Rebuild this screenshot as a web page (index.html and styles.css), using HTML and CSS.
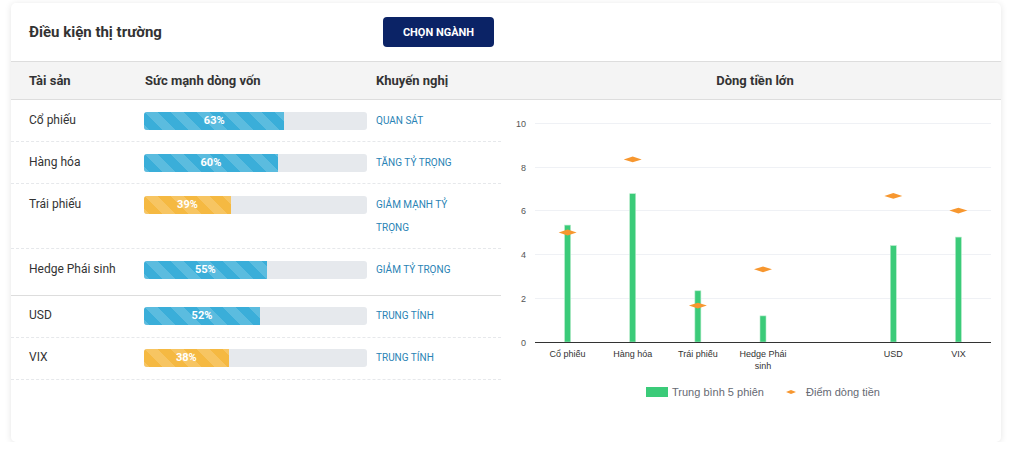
FILE: index.html
```html
<!DOCTYPE html>
<html lang="vi">
<head>
<meta charset="utf-8">
<title>Điều kiện thị trường</title>
<link rel="stylesheet" href="styles.css">
</head>
<body>
<div class="card">
  <div class="card-header">
    <h2 class="title">Điều kiện thị trường</h2>
    <button class="btn">CHỌN NGÀNH</button>
  </div>
  <div class="table-head">
    <div class="head-left">
      <div>Tài sản</div>
      <div>Sức mạnh dòng vốn</div>
      <div>Khuyến nghị</div>
    </div>
    <div class="head-right">Dòng tiền lớn</div>
  </div>
  <div class="body">
    <div class="rows">
      <div class="row">
        <div class="label">Cổ phiếu</div>
        <div class="bar"><div class="fill blue" style="width:63%">63%</div></div>
        <div class="rec">QUAN SÁT</div>
      </div>
      <div class="row">
        <div class="label">Hàng hóa</div>
        <div class="bar"><div class="fill blue" style="width:60%">60%</div></div>
        <div class="rec">TĂNG TỶ TRỌNG</div>
      </div>
      <div class="row">
        <div class="label">Trái phiếu</div>
        <div class="bar"><div class="fill yellow" style="width:39%">39%</div></div>
        <div class="rec">GIẢM MẠNH TỶ TRỌNG</div>
      </div>
      <div class="row group-end">
        <div class="label">Hedge Phái sinh</div>
        <div class="bar"><div class="fill blue" style="width:55%">55%</div></div>
        <div class="rec">GIẢM TỶ TRỌNG</div>
      </div>
      <div class="row second">
        <div class="label">USD</div>
        <div class="bar"><div class="fill blue" style="width:52%">52%</div></div>
        <div class="rec">TRUNG TÍNH</div>
      </div>
      <div class="row second">
        <div class="label">VIX</div>
        <div class="bar"><div class="fill yellow" style="width:38%">38%</div></div>
        <div class="rec">TRUNG TÍNH</div>
      </div>
    </div>
    <div class="chart">
      <svg class="chart-svg" width="500" height="310" viewBox="0 0 500 310">
        <g class="grid">
          <line x1="34" y1="23.5" x2="490" y2="23.5"/>
          <line x1="34" y1="67.5" x2="490" y2="67.5"/>
          <line x1="34" y1="110.5" x2="490" y2="110.5"/>
          <line x1="34" y1="154.5" x2="490" y2="154.5"/>
          <line x1="34" y1="198.5" x2="490" y2="198.5"/>
        </g>
        <g class="ylab">
          <text x="25" y="26.5">10</text>
          <text x="25" y="70.5">8</text>
          <text x="25" y="114">6</text>
          <text x="25" y="158">4</text>
          <text x="25" y="201.5">2</text>
          <text x="25" y="245.5">0</text>
        </g>
        <g class="bars">
          <rect x="63.6" y="125.1" width="6" height="116.9"/>
          <rect x="128.7" y="93.7" width="6" height="148.3"/>
          <rect x="193.9" y="190.8" width="6" height="51.2"/>
          <rect x="259" y="215.9" width="6" height="26.1"/>
          <rect x="389.3" y="145.6" width="6" height="96.4"/>
          <rect x="454.4" y="137.1" width="6" height="104.9"/>
        </g>
        <line class="axis" x1="34" y1="242.5" x2="490" y2="242.5"/>
        <g class="marks">
          <polygon points="57.6,132.5 66.6,129.6 75.6,132.5 66.6,135.4"/>
          <polygon points="122.7,59.4 131.7,56.5 140.7,59.4 131.7,62.3"/>
          <polygon points="187.9,205.6 196.9,202.7 205.9,205.6 196.9,208.5"/>
          <polygon points="253,169.3 262,166.4 271,169.3 262,172.2"/>
          <polygon points="383.3,95.9 392.3,93 401.3,95.9 392.3,98.8"/>
          <polygon points="448.4,110.6 457.4,107.7 466.4,110.6 457.4,113.5"/>
        </g>
        <g class="xlab">
          <text x="66.6" y="256.5">Cổ phiếu</text>
          <text x="131.7" y="256.5">Hàng hóa</text>
          <text x="196.9" y="256.5">Trái phiếu</text>
          <text x="262" y="256.5">Hedge Phái</text>
          <text x="262" y="268.5">sinh</text>
          <text x="392.3" y="256.5">USD</text>
          <text x="457.4" y="256.5">VIX</text>
        </g>
        <g class="legend">
          <rect x="145" y="287" width="22" height="10"/>
          <text x="171" y="296">Trung bình 5 phiên</text>
          <polygon points="285,292 290,290 295,292 290,294"/>
          <text x="305" y="296">Điểm dòng tiền</text>
        </g>
      </svg>
    </div>
  </div>
</div>
</body>
</html>
```

FILE: styles.css
```css
* { box-sizing: border-box; }
html, body { margin: 0; padding: 0; background: #ffffff; }
body {
  font-family: Roboto, "Liberation Sans", Arial, sans-serif;
  color: #333333;
  padding: 3px 14px 0 11px;
}
.card {
  height: 439px;
  background: #ffffff;
  border-radius: 5px;
  box-shadow: 0 1px 7px rgba(0, 0, 0, 0.11);
  overflow: hidden;
}
.card-header {
  height: 58px;
  display: flex;
  align-items: center;
  padding-left: 18px;
}
.title {
  margin: 0;
  width: 354px;
  font-size: 15px;
  font-weight: 700;
  color: #333333;
}
.btn {
  width: 111px;
  height: 30px;
  border: none;
  border-radius: 4px;
  background: #0b2366;
  color: #ffffff;
  font-family: Roboto, "Liberation Sans", Arial, sans-serif;
  font-size: 11px;
  font-weight: 700;
  padding: 0;
}
.table-head {
  display: grid;
  grid-template-columns: 490px 1fr;
  height: 39px;
  background: #f4f4f4;
  border-top: 1px solid #dddddd;
  border-bottom: 1px solid #dddddd;
  font-size: 13px;
  font-weight: 700;
  color: #333333;
}
.head-left {
  display: grid;
  grid-template-columns: 116px 231px 1fr;
  align-items: center;
  padding-left: 18px;
}
.head-right {
  display: flex;
  align-items: center;
  justify-content: center;
  padding-left: 8px;
}
.body {
  display: grid;
  grid-template-columns: 490px 1fr;
}
.row {
  display: grid;
  grid-template-columns: 106px 223px 1fr;
  column-gap: 9px;
  align-items: start;
  padding: 8px 0 9px 18px;
  border-bottom: 1px dashed #e6e8eb;
  line-height: 23px;
}
.row.group-end {
  padding-bottom: 14px;
  border-bottom: 1px solid #dddddd;
}
.row.second {
  padding-top: 7px;
  padding-bottom: 10px;
}
.label {
  font-size: 12px;
  color: #333333;
  padding-top: 1px;
}
.bar {
  margin-top: 4px;
  height: 18px;
  border-radius: 3px;
  background: #e6e9ed;
  overflow: hidden;
}
.fill {
  height: 18px;
  line-height: 18px;
  text-align: center;
  color: #ffffff;
  font-size: 11px;
  font-weight: 700;
  background-size: 26px 26px;
  background-image: linear-gradient(45deg,
    rgba(255,255,255,0.17) 25%, transparent 25%,
    transparent 50%, rgba(255,255,255,0.17) 50%,
    rgba(255,255,255,0.17) 75%, transparent 75%, transparent);
}
.fill.blue { background-color: #3aaed9; }
.fill.yellow { background-color: #f5b942; }
.rec {
  font-size: 10px;
  color: #2a83b5;
  padding-top: 1px;
  padding-right: 28px;
}
.chart { position: relative; }
.chart-svg { display: block; font-family: "Liberation Sans", Arial, sans-serif; }
.grid line { stroke: #eff1f5; stroke-width: 1; }
.axis { stroke: #333333; stroke-width: 1; }
.ylab text { font-size: 9px; fill: #555555; text-anchor: end; }
.xlab text { font-size: 9px; fill: #333333; text-anchor: middle; }
.bars rect { fill: #3bcb79; stroke: #b6ecca; stroke-width: 0.6; }
.marks polygon { fill: #f7972f; }
.legend rect { fill: #3bcb79; }
.legend polygon { fill: #f7972f; }
.legend text { font-size: 11px; fill: #666a73; }
```
